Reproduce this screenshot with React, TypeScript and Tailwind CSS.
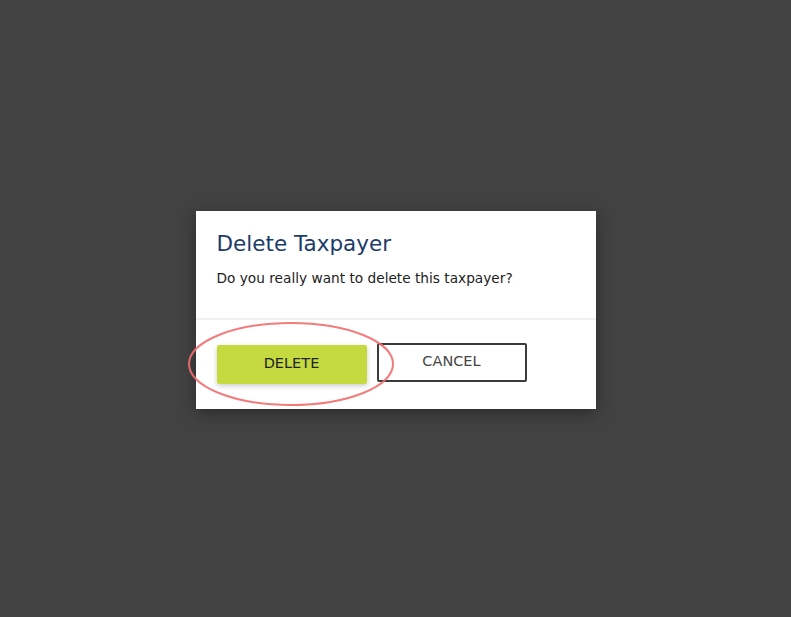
export default function App() {
  return (
    <div className="flex h-[617px] w-[791px] items-center justify-center bg-[#424242] font-['DejaVu_Sans',sans-serif]">
      <div className="relative mt-[2px] w-[400px] bg-white shadow-[0_4px_16px_rgba(0,0,0,0.35)]">
        <div className="px-[21px] pt-[20px] pb-[31px]">
          <h2 className="text-[21.5px] leading-[26px] text-[#1d3b6a]">Delete Taxpayer</h2>
          <p className="mt-[12px] text-[13.7px] leading-[18px] text-[#222]">
            Do you really want to delete this taxpayer?
          </p>
        </div>
        <div className="h-[2px] bg-[#f0f0f0]" />
        <div className="flex gap-[10px] px-[21px] pt-[23px] pb-[25px]">
          <button className="mt-[2px] h-[39px] w-[150px] rounded-[2px] bg-[#c4da40] text-[14.5px] text-[#222] shadow-[0_2px_5px_rgba(0,0,0,0.2)]">
            DELETE
          </button>
          <button className="h-[39px] w-[150px] rounded-[2px] border-2 border-[#3a3a3a] bg-white text-[14.5px] text-[#444]">
            CANCEL
          </button>
        </div>
        <svg className="pointer-events-none absolute left-[-9px] top-[110px]" width="212" height="86" viewBox="0 0 212 86">
          <ellipse cx="104" cy="43" rx="102" ry="41" fill="none" stroke="#f26d6d" strokeOpacity="0.9" strokeWidth="2" />
        </svg>
      </div>
    </div>
  )
}
